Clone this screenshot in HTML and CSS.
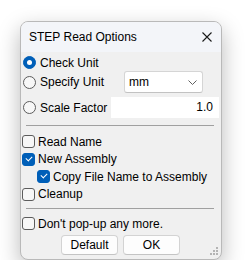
FILE: index.html
```html
<!DOCTYPE html>
<html lang="en">
<head>
    <meta charset="UTF-8">
    <title>STEP Read Options</title>
    <link rel="stylesheet" href="styles.css">
</head>
<body>
    <div class="dialog">
        <div class="titlebar">
            <span class="title">STEP Read Options</span>
            <svg class="close" width="10" height="10" viewBox="0 0 10 10">
                <path d="M0.5 0.5 L9.5 9.5 M9.5 0.5 L0.5 9.5" stroke="#1a1a1a" stroke-width="1.1" fill="none"/>
            </svg>
        </div>

        <div class="content">
            <!-- Units -->
            <div class="row row-check">
                <span class="radio checked"></span>
                <span class="label">Check Unit</span>
            </div>
            <div class="row row-unit">
                <span class="radio"></span>
                <span class="label">Specify Unit</span>
                <div class="combo">
                    <span>mm</span>
                    <svg width="9" height="5" viewBox="0 0 9 5">
                        <path d="M0.5 0.5 L4.5 4.5 L8.5 0.5" stroke="#606060" stroke-width="1" fill="none"/>
                    </svg>
                </div>
            </div>
            <div class="row row-scale">
                <span class="radio"></span>
                <span class="label">Scale Factor</span>
                <div class="field">1.0</div>
            </div>

            <div class="separator sep-1"></div>

            <!-- Options -->
            <div class="row row-opt">
                <span class="checkbox"></span>
                <span class="label">Read Name</span>
            </div>
            <div class="row row-opt">
                <span class="checkbox checked"></span>
                <span class="label">New Assembly</span>
            </div>
            <div class="row row-opt indent">
                <span class="checkbox checked"></span>
                <span class="label">Copy File Name to Assembly</span>
            </div>
            <div class="row row-opt">
                <span class="checkbox"></span>
                <span class="label">Cleanup</span>
            </div>

            <div class="separator sep-2"></div>

            <div class="row row-popup">
                <span class="checkbox"></span>
                <span class="label">Don't pop-up any more.</span>
            </div>

            <div class="buttons">
                <button class="btn">Default</button>
                <button class="btn">OK</button>
            </div>
        </div>

        <svg class="grip" width="10" height="10" viewBox="0 0 10 10">
            <rect x="7" y="0" width="2" height="2" fill="#b4b4b4"/>
            <rect x="4" y="3" width="2" height="2" fill="#b4b4b4"/>
            <rect x="7" y="3" width="2" height="2" fill="#b4b4b4"/>
            <rect x="1" y="6" width="2" height="2" fill="#b4b4b4"/>
            <rect x="4" y="6" width="2" height="2" fill="#b4b4b4"/>
            <rect x="7" y="6" width="2" height="2" fill="#b4b4b4"/>
        </svg>
    </div>
</body>
</html>
```

FILE: styles.css
```css
* {
    margin: 0;
    padding: 0;
    box-sizing: border-box;
}

body {
    font-family: 'Segoe UI', 'Liberation Sans', Arial, sans-serif;
    font-size: 12px;
    color: #000;
    background: #fff;
    padding: 21px 0 0 20px;
}

.dialog {
    position: relative;
    width: 202px;
    height: 239px;
    background: #f0f0f0;
    border: 1px solid #b9b9b9;
    border-radius: 8px;
    box-shadow: 0 8px 22px rgba(0,0,0,0.28);
    overflow: hidden;
}

.titlebar {
    height: 30px;
    background: #f3f5f9;
    display: flex;
    align-items: center;
    justify-content: space-between;
    padding: 0 9px 0 8px;
}

.title {
    font-size: 12px;
    margin-top: -1px;
}

.close {
    display: block;
}

.content {
    padding: 2px 2px 0 1px;
}

.row {
    display: flex;
    align-items: center;
}

.row .label {
    line-height: 14px;
}

.row-check {
    height: 17px;
}

.row-unit {
    height: 22px;
}

.row-scale {
    height: 21px;
    margin-top: 4px;
}

.radio {
    width: 13px;
    height: 13px;
    border-radius: 50%;
    border: 1px solid #5c5c5c;
    background: #f7f7f7;
    margin: 0 4px 0 1px;
    flex-shrink: 0;
    display: flex;
    align-items: center;
    justify-content: center;
}

.radio.checked {
    border-color: #005fb8;
    background: #005fb8;
}

.radio.checked::after {
    content: '';
    width: 5px;
    height: 5px;
    border-radius: 50%;
    background: #fff;
}

.combo {
    margin-left: auto;
    margin-right: 16px;
    width: 79px;
    height: 22px;
    background: #fff;
    border: 1px solid #d5d5d5;
    border-bottom-color: #c2c2c2;
    border-radius: 3px;
    display: flex;
    align-items: center;
    justify-content: space-between;
    padding: 0 5px 0 4px;
}

.field {
    margin-left: auto;
    width: 108px;
    height: 21px;
    background: #fff;
    text-align: right;
    line-height: 21px;
    padding-right: 6px;
}

.separator {
    height: 1px;
    background: #a0a0a0;
    margin-left: 4px;
    margin-right: 5px;
}

.sep-1 {
    margin-top: 7px;
    margin-bottom: 7px;
}

.sep-2 {
    margin-top: 5px;
    margin-bottom: 6px;
}

.row-opt {
    height: 17.5px;
}

.row-popup {
    height: 17px;
}

.indent {
    padding-left: 15px;
}

.checkbox {
    width: 13px;
    height: 13px;
    border: 1px solid #5c5c5c;
    border-radius: 3px;
    background: #f7f7f7;
    margin-right: 3px;
    flex-shrink: 0;
    position: relative;
}

.checkbox.checked {
    background: #005fb8;
    border-color: #005fb8;
}

.checkbox.checked::after {
    content: '';
    position: absolute;
    left: 3px;
    top: 2px;
    width: 5px;
    height: 3px;
    border-left: 1px solid #fff;
    border-bottom: 1px solid #fff;
    transform: rotate(-45deg);
}

.buttons {
    display: flex;
    justify-content: center;
    gap: 5px;
    margin-top: 3px;
}

.btn {
    width: 57px;
    height: 20px;
    font-family: inherit;
    font-size: 12px;
    color: #000;
    background: #fdfdfd;
    border: 1px solid #d3d3d3;
    border-bottom-color: #c4c4c4;
    border-radius: 4px;
}

.grip {
    position: absolute;
    right: 2px;
    bottom: 2px;
}
```
